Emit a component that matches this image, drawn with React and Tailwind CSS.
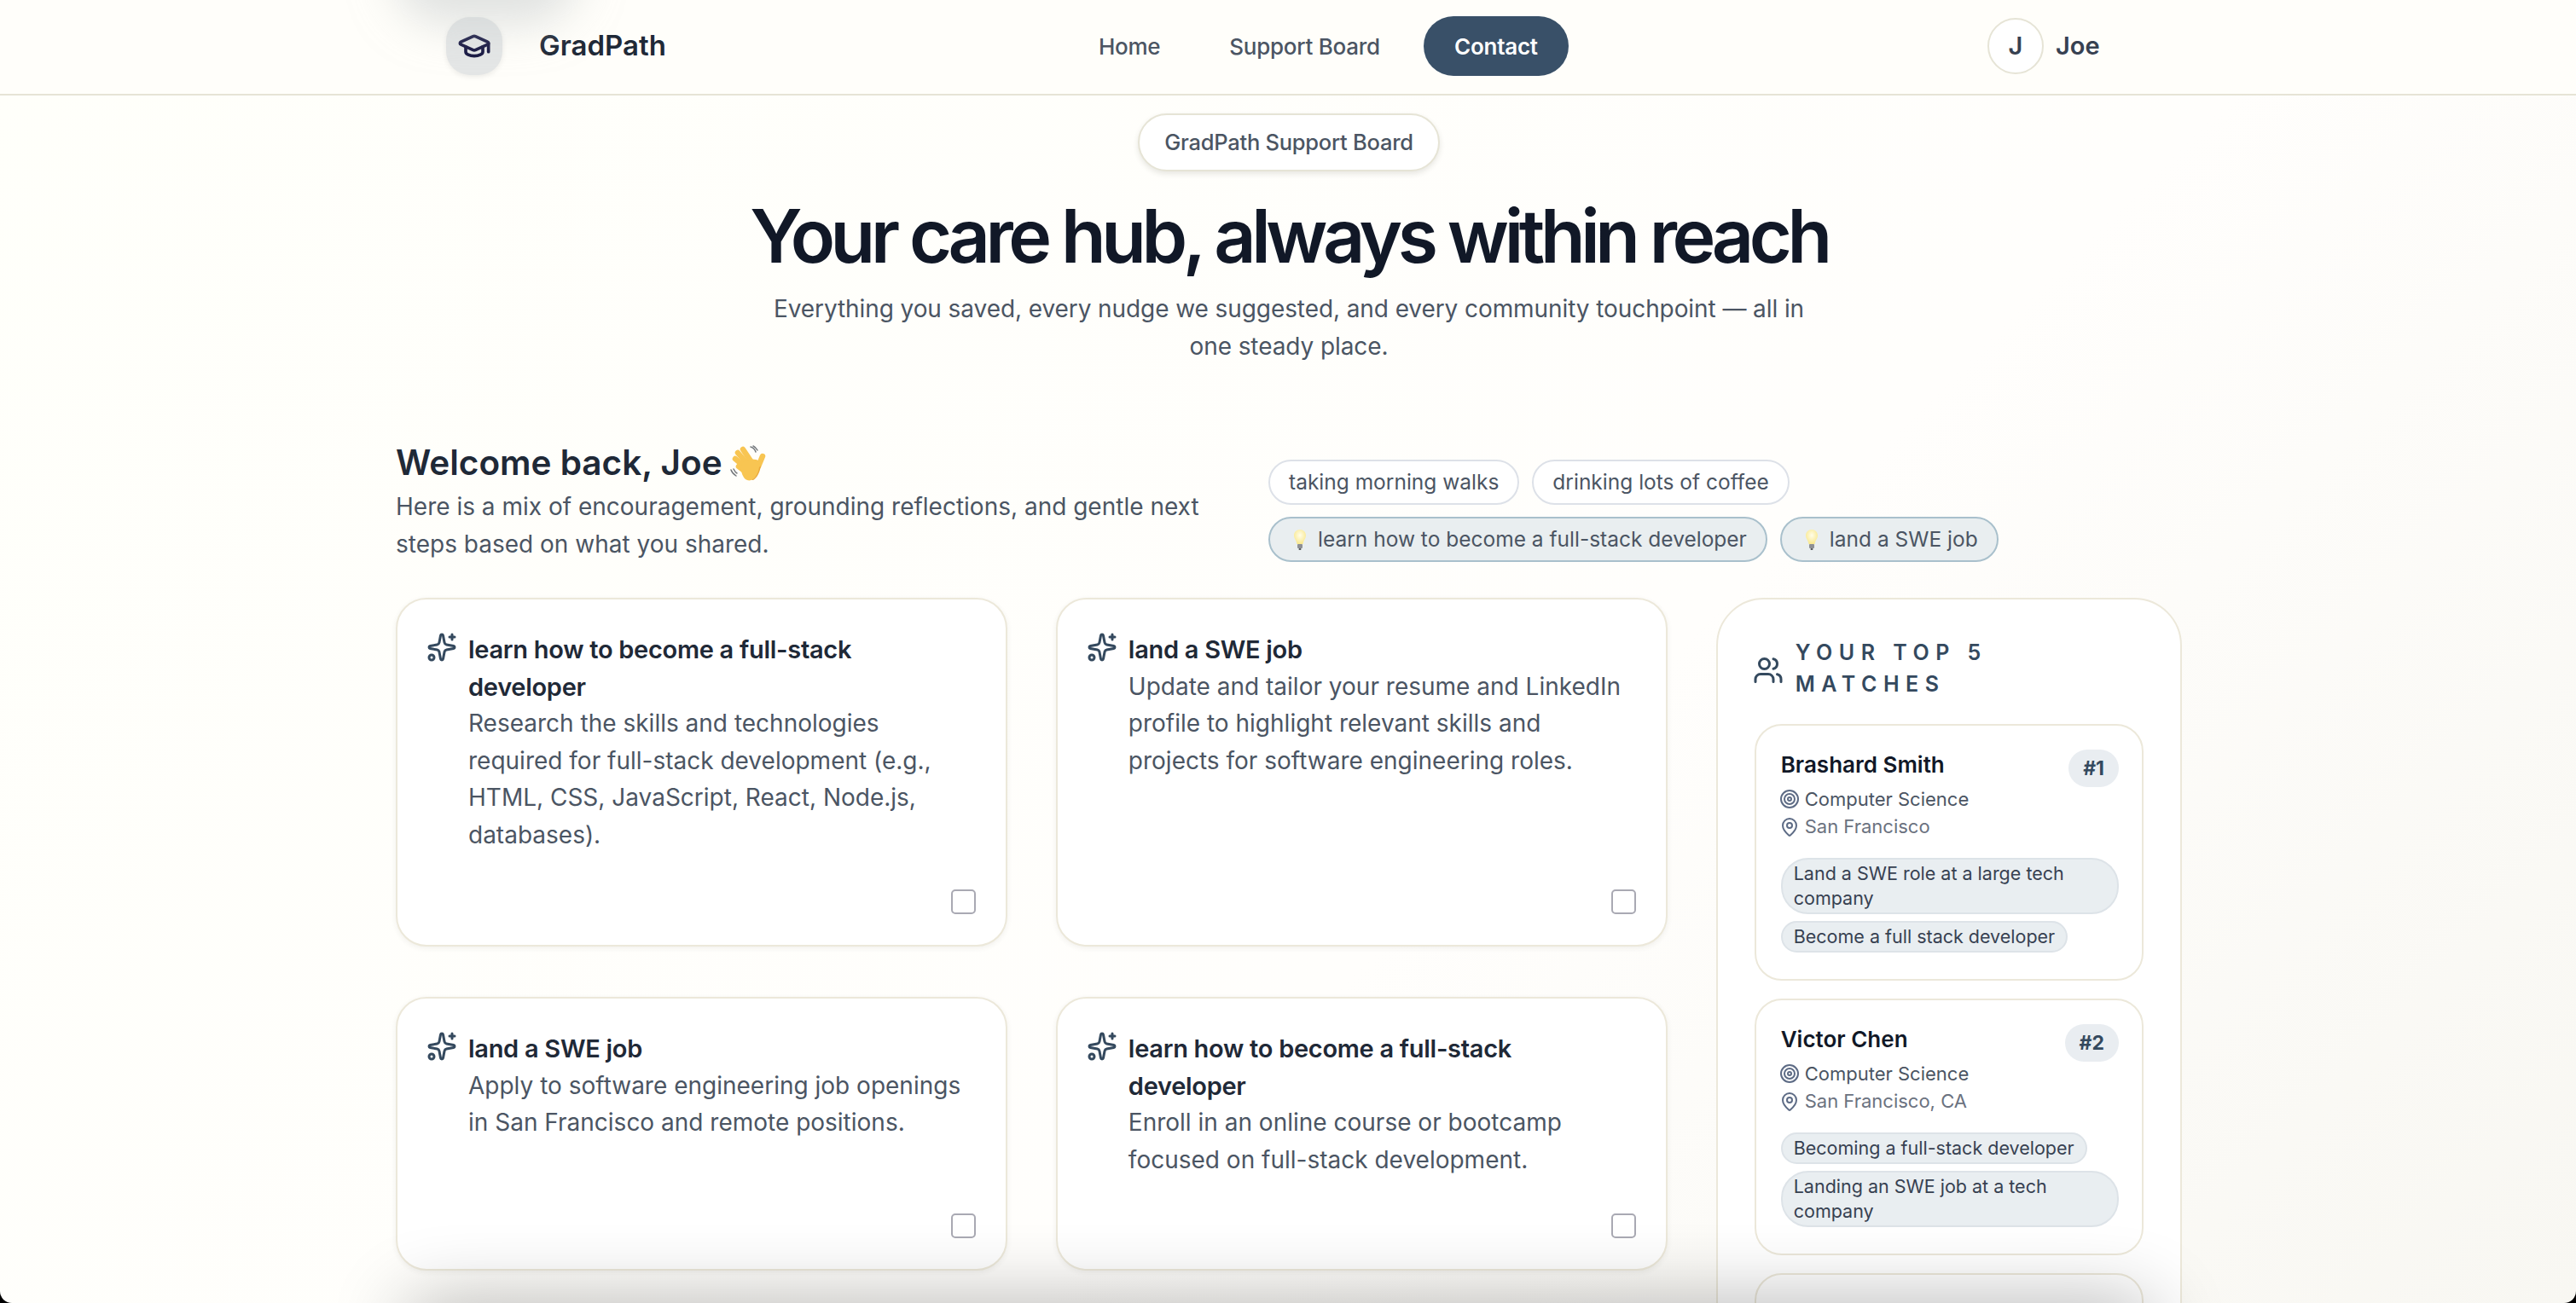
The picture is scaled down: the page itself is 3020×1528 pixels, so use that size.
import { GraduationCap, Sparkles, Users, Target, MapPin } from 'lucide-react';

const goals = [
  { title: 'learn how to become a full-stack developer', text: 'Research the skills and technologies required for full-stack development (e.g., HTML, CSS, JavaScript, React, Node.js, databases).', h: 'h-[409px]' },
  { title: 'land a SWE job', text: 'Update and tailor your resume and LinkedIn profile to highlight relevant skills and projects for software engineering roles.', h: 'h-[409px]' },
  { title: 'land a SWE job', text: 'Apply to software engineering job openings in San Francisco and remote positions.', h: 'h-[321px]' },
  { title: 'learn how to become a full-stack developer', text: 'Enroll in an online course or bootcamp focused on full-stack development.', h: 'h-[321px]' },
];

const matches = [
  { name: 'Brashard Smith', rank: '#1', field: 'Computer Science', place: 'San Francisco', tags: ['Land a SWE role at a large tech company', 'Become a full stack developer'] },
  { name: 'Victor Chen', rank: '#2', field: 'Computer Science', place: 'San Francisco, CA', tags: ['Becoming a full-stack developer', 'Landing an SWE job at a tech company'] },
];

function Bulb() {
  return (
    <svg width="16" height="26" viewBox="0 0 16 26" className="ml-[5px] shrink-0">
      <defs>
        <radialGradient id="bulbGlow" cx="50%" cy="40%" r="60%">
          <stop offset="0%" stopColor="#fffde8" />
          <stop offset="100%" stopColor="#f9e88e" />
        </radialGradient>
      </defs>
      <path d="M8 1C4 1 1 4 1 8c0 3.500 3 6 3.500 10h7C12 14 15 11.500 15 8c0-4-3-7-7-7z" fill="url(#bulbGlow)" />
      <rect x="5" y="18" width="6" height="5" rx="1" fill="#8e9094" />
      <rect x="6.500" y="23" width="3" height="2" rx="1" fill="#55585c" />
    </svg>
  );
}

function Wave() {
  return (
    <svg width="42" height="43" viewBox="0 0 42 43" className="ml-[9px] shrink-0">
      <g stroke="#f8c552" strokeWidth="6.500" strokeLinecap="round" fill="none">
        <path d="M15 5l10 15" />
        <path d="M9 9l12 14" />
        <path d="M6 16l13 11" />
        <path d="M10 25l9 7" />
        <path d="M38 13l-5 12" />
      </g>
      <path d="M14 21c4-5 15-6 21-2 1 8-2 17-8 21-5 3-10 1-12-4-2-4-3-10-1-15z" fill="#f8c552" />
      <path d="M27 41c5-3 8-10 9-17l-2 2c-1 7-4 12-9 15z" fill="#e9a93c" />
      <g stroke="#74787c" strokeWidth="1.500" fill="none" strokeLinecap="round">
        <path d="M24 2c3 1 5 3 6 6" />
        <path d="M27 1c2 1 4 3 5 5" />
        <path d="M1 29c1 3 3 5 6 7" />
        <path d="M4 28c1 2 2 4 4 5" />
      </g>
    </svg>
  );
}

function GoalCard({ goal }) {
  return (
    <div className={`relative ${goal.h} rounded-[36px] border-2 border-[#ece8da] bg-white pt-[37px] pr-[50px] pl-[34px] shadow-[0_2px_6px_rgba(60,60,40,0.07)]`}>
      <div className="flex gap-[13px]">
        <Sparkles size={36} strokeWidth={2} className="mt-[1px] shrink-0 text-[#34495e]" />
        <div className="text-[28px] leading-[43.500px]">
          <p className="text-[29px] font-semibold tracking-[-0.01em] text-[#1f2937]">{goal.title}</p>
          <p className="text-[#4b5563]">{goal.text}</p>
        </div>
      </div>
      <div className="absolute right-[35px] bottom-[36px] h-[29px] w-[29px] rounded-[5px] border-2 border-[#a9a9b3] bg-white"></div>
    </div>
  );
}

function MatchCard({ match }) {
  return (
    <div className="h-[301px] rounded-[32px] border-2 border-[#ece8da] bg-white pt-[27px] pr-[27px] pl-[29px]">
      <div className="flex items-start justify-between">
        <p className="text-[26px] leading-[38px] font-semibold text-[#111827]">{match.name}</p>
        <span className="mt-[1px] rounded-full bg-[#e9edf1] px-[17px] py-[7px] text-[23px] leading-[30px] font-bold text-[#34495e]">{match.rank}</span>
      </div>
      <div className="mt-[-2px] ml-[-2px] flex items-center gap-[6px] text-[22px] leading-[32px] text-[#4b5563]">
        <Target size={24} strokeWidth={2} className="text-[#5d6b85]" />
        {match.field}
      </div>
      <div className="ml-[-2px] flex items-center gap-[6px] text-[22px] leading-[33px] text-[#6b7280]">
        <MapPin size={24} strokeWidth={2} className="text-[#5d6b85]" />
        {match.place}
      </div>
      <div className="mt-[20px] flex flex-col items-start gap-[8px]">
        {match.tags.map((tag) => (
          <span key={tag} className="rounded-[32px] border-2 border-[#dde3e8] bg-[#e9eef1] px-[13px] py-[2px] text-[21.500px] leading-[29px] text-[#374151]">{tag}</span>
        ))}
      </div>
    </div>
  );
}

export default function App() {
  return (
    <div className="h-[1528px] bg-black">
      <div className="relative h-full overflow-hidden rounded-b-[14px] bg-[linear-gradient(135deg,#fffffa_0%,#fffefc_60%,#f8f7f2_100%)] font-['Inter',sans-serif]">
        {/* Navbar */}
        <header className="relative flex h-[112px] items-center border-b-2 border-[#e6e4d6] bg-[#fffefa] pb-[2px]">
          <div className="ml-[523px] flex h-[68px] w-[66px] items-center justify-center rounded-[28px] bg-[#e4e6e6] shadow-[0_2px_6px_rgba(0,0,0,0.08)]">
            <GraduationCap size={40} strokeWidth={2.200} className="text-[#151540]" />
          </div>
          <span className="ml-[43px] text-[33px] font-semibold text-[#1f2937]">GradPath</span>
          <nav className="ml-[507px] flex items-center text-[26px] font-medium tracking-[-0.01em] text-[#4b5563]">
            <span>Home</span>
            <span className="ml-[81px]">Support Board</span>
            <span className="ml-[51px] flex h-[70px] w-[170px] items-center justify-center rounded-full bg-[#395068] font-semibold text-white">Contact</span>
          </nav>
          <div className="ml-[491px] flex items-center gap-[14px]">
            <div className="flex h-[66px] w-[66px] items-center justify-center rounded-full border-2 border-[#e6e4d6] bg-white text-[29px] font-semibold text-[#374151]">J</div>
            <span className="text-[29px] font-semibold text-[#374151]">Joe</span>
          </div>
        </header>

        <main className="relative mx-auto w-[2094px] translate-x-[1px]">
          {/* Hero */}
          <section className="flex flex-col items-center pt-[21px]">
            <span className="flex h-[68px] items-center rounded-full border-2 border-[#e6e4d6] bg-white px-[29px] text-[25.500px] font-medium tracking-[-0.01em] text-[#4b5563] shadow-[0_3px_6px_rgba(60,60,40,0.12)]">GradPath Support Board</span>
            <h1 className="mt-[20px] text-[86px] leading-[112px] font-semibold tracking-[-5.400px] text-[#111827]">Your care hub, always within reach</h1>
            <p className="mt-[7px] w-[1240px] text-center text-[28px] leading-[44px] tracking-[-0.003em] text-[#4b5563]">Everything you saved, every nudge we suggested, and every community touchpoint — all in one steady place.</p>
          </section>

          {/* Welcome row */}
          <section className="mt-[90px] flex">
            <div className="w-[1023px]">
              <h2 className="flex items-center text-[40.500px] leading-[50px] font-semibold text-[#1f2937]">Welcome back, Joe<Wave /></h2>
              <p className="mt-[5px] w-[970px] text-[28px] leading-[43.500px] text-[#4b5563]">Here is a mix of encouragement, grounding reflections, and gentle next steps based on what you shared.</p>
            </div>
            <div className="flex flex-col gap-[14px] pt-[21px] text-[24.500px] text-[#4b5563]">
              <div className="flex gap-[15px]">
                <span className="flex h-[53px] items-center rounded-full border-2 border-[#dde1e8] bg-white px-[22px]">taking morning walks</span>
                <span className="flex h-[53px] items-center rounded-full border-2 border-[#dde1e8] bg-white px-[22px]">drinking lots of coffee</span>
              </div>
              <div className="flex gap-[15px]">
                <span className="flex h-[53px] items-center gap-[13px] rounded-full border-2 border-[#a9c0cc] bg-[#e9eef0] px-[22px]"><Bulb />learn how to become a full-stack developer</span>
                <span className="flex h-[53px] items-center gap-[13px] rounded-full border-2 border-[#a9c0cc] bg-[#e9eef0] px-[22px]"><Bulb />land a SWE job</span>
              </div>
            </div>
          </section>

          {/* Goals and matches */}
          <section className="mt-[41px] flex gap-[57px]">
            <div className="grid w-[1493px] grid-cols-2 content-start gap-x-[57px] gap-y-[59px]">
              {goals.map((goal, i) => (
                <GoalCard key={i} goal={goal} />
              ))}
            </div>
            <aside className="h-[1000px] w-[547px] rounded-[56px] border-2 border-[#ece8da] bg-white px-[43px] pt-[44px]">
              <div className="ml-[-2px] flex items-center gap-[14px]">
                <Users size={36} strokeWidth={2} className="mt-[4px] shrink-0 text-[#34495e]" />
                <h3 className="text-[25px] leading-[37px] font-semibold tracking-[0.3em] text-[#34495e]">YOUR TOP 5 MATCHES</h3>
              </div>
              <div className="mt-[28px] flex flex-col gap-[21px]">
                {matches.map((match) => (
                  <MatchCard key={match.name} match={match} />
                ))}
                <div className="h-[300px] rounded-[32px] border-2 border-[#ece8da] bg-white"></div>
              </div>
            </aside>
          </section>
        </main>

        {/* Sombras de elementos fuera de pantalla */}
        <div className="absolute top-[-70px] left-[490px] h-[70px] w-[160px] rounded-full bg-[#dfe2e2] shadow-[0_0_50px_30px_rgba(200,205,205,0.55)]"></div>
        <div className="absolute right-[500px] bottom-[-80px] left-[480px] h-[78px] shadow-[0_0_90px_rgba(0,0,0,0.32)]"></div>
      </div>
    </div>
  );
}
